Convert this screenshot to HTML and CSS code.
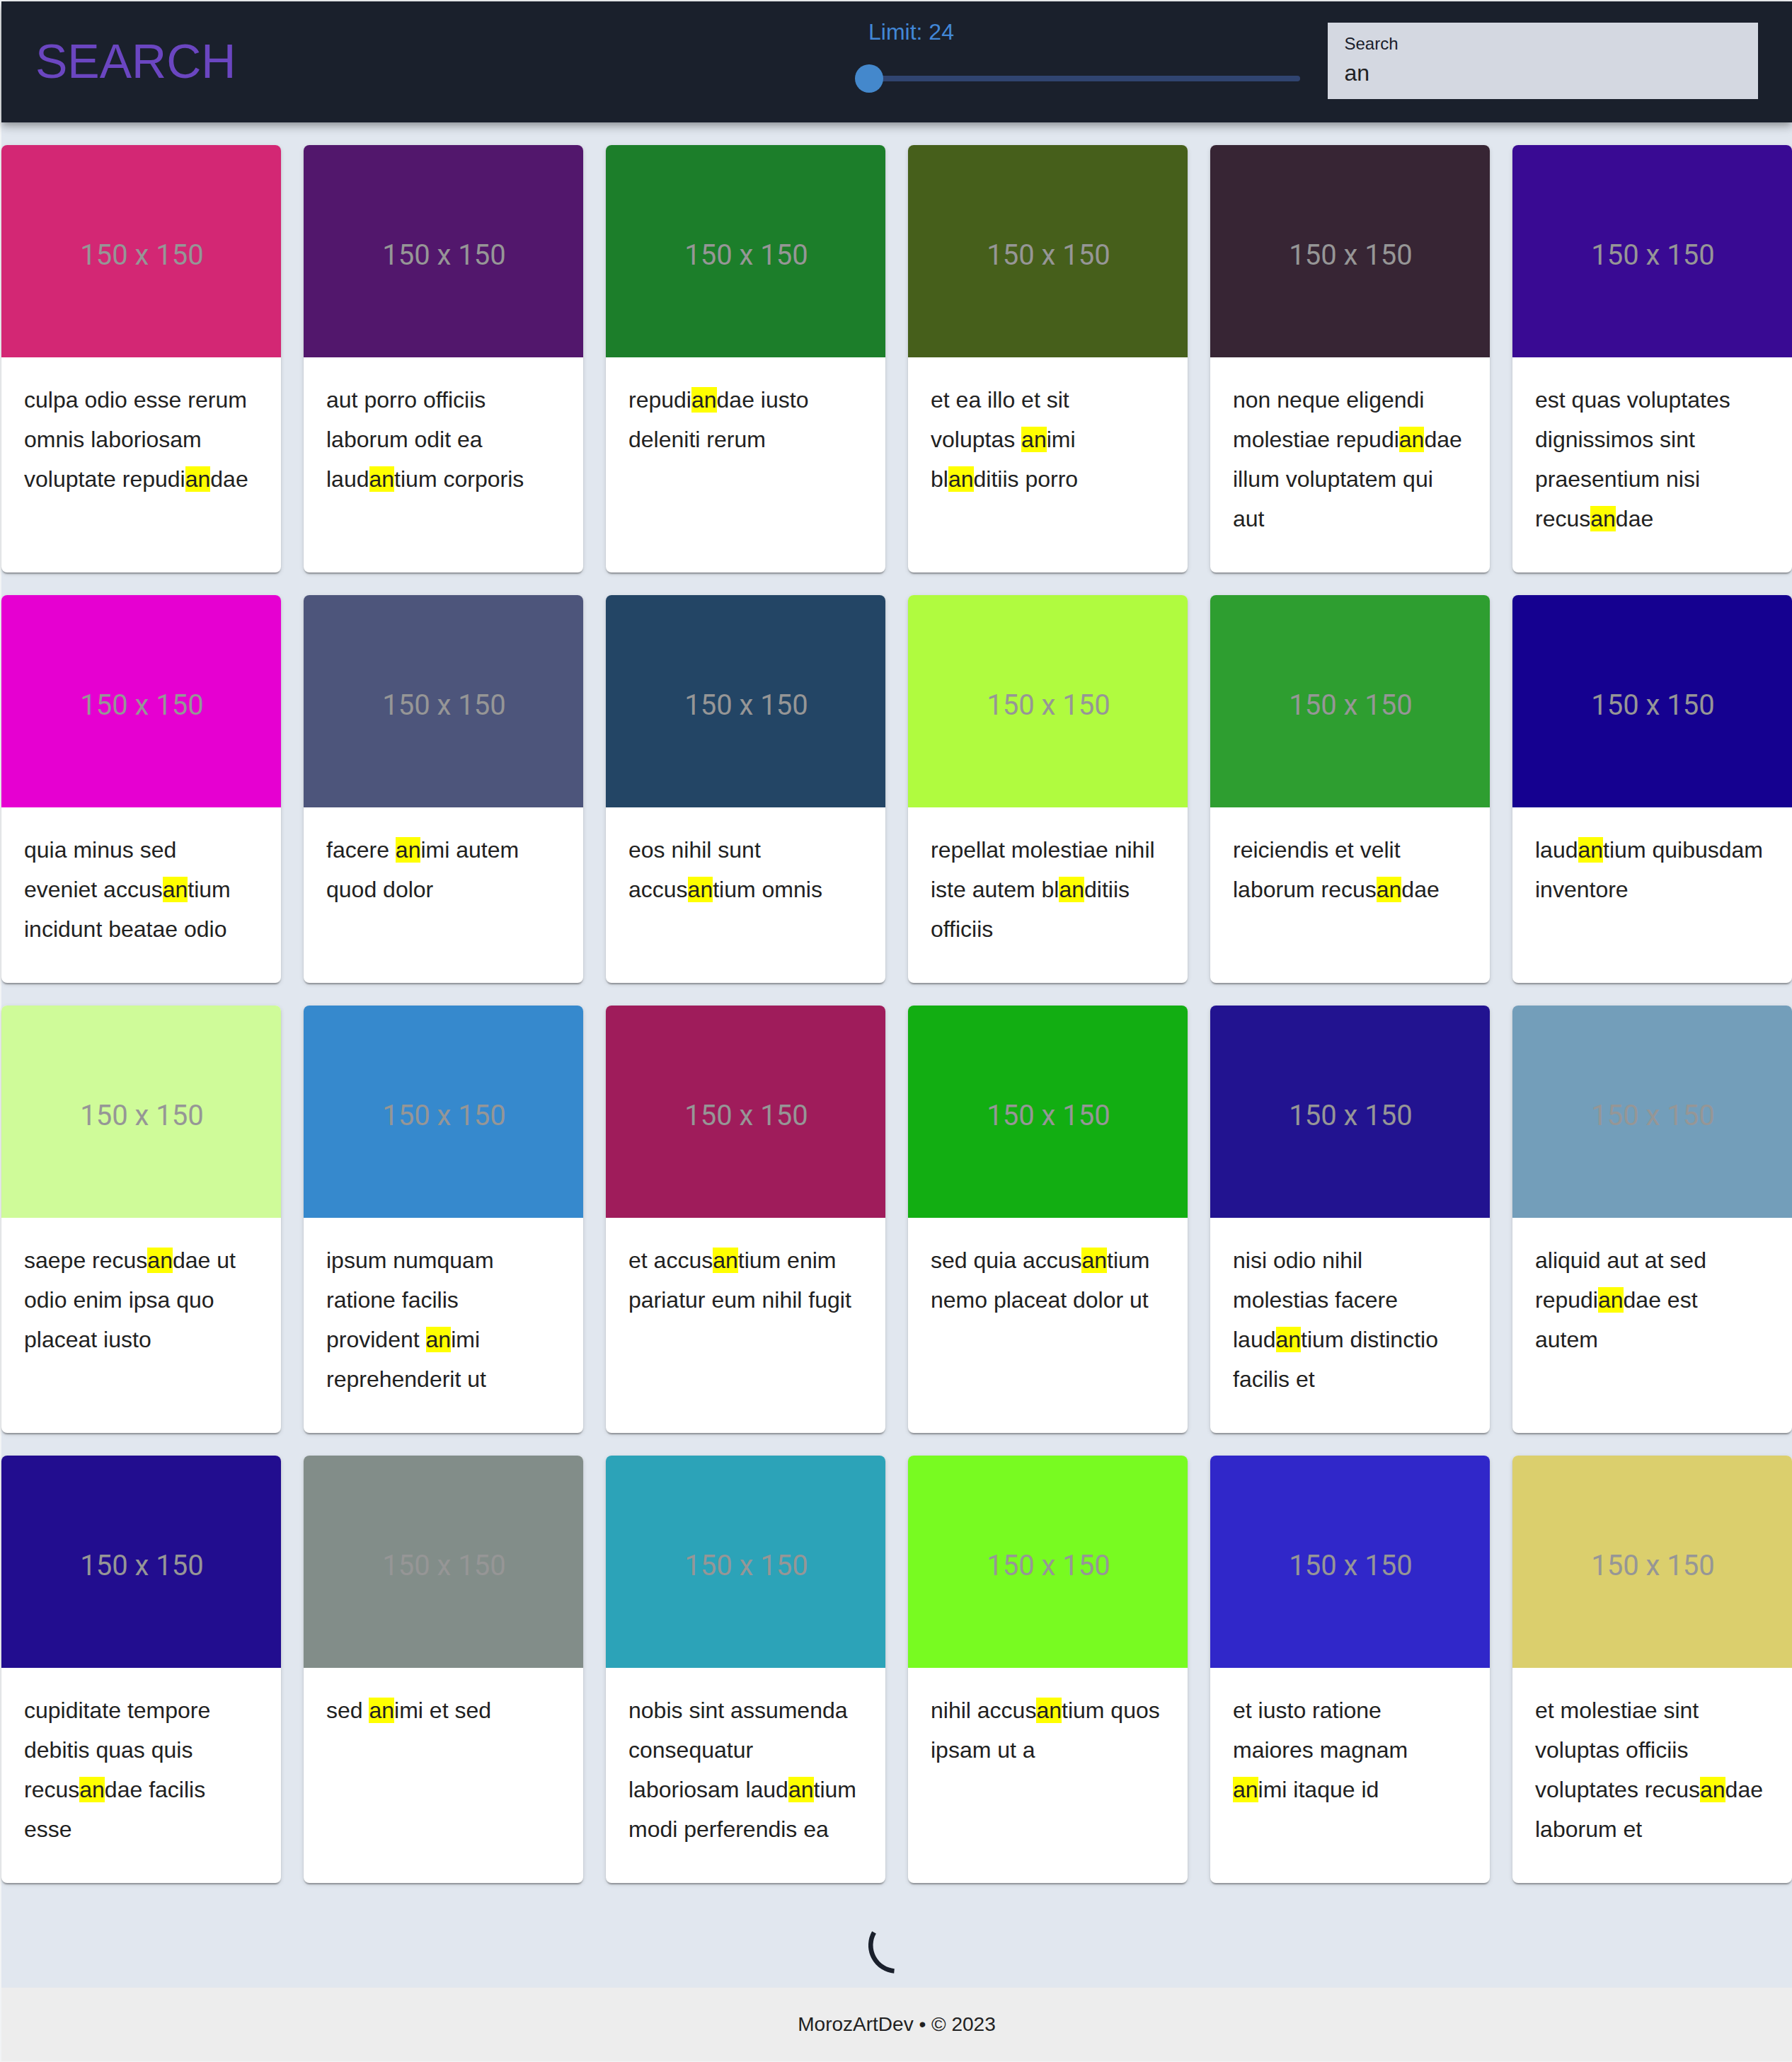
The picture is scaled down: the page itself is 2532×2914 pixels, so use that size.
FILE: index.html
```html
<!DOCTYPE html>
<html lang="en">
<head>
<meta charset="utf-8">
<title>Search</title>
<link rel="stylesheet" href="styles.css">
</head>
<body>
<header class="app-bar">
  <h1 class="title">SEARCH</h1>
  <div class="limit">
    <label class="limit-label" for="limit">Limit: 24</label>
    <input class="slider" id="limit" type="range" min="24" max="100" value="24">
  </div>
  <div class="search">
    <label class="search-label" for="search">Search</label>
    <input class="search-input" id="search" type="text" value="an">
  </div>
</header>
<main class="content">
  <section class="grid">
    <article class="card"><div class="thumb c1">150 x 150</div><p class="text">culpa odio esse rerum omnis laboriosam voluptate repudi<mark>an</mark>dae</p></article>
    <article class="card"><div class="thumb c2">150 x 150</div><p class="text">aut porro officiis laborum odit ea laud<mark>an</mark>tium corporis</p></article>
    <article class="card"><div class="thumb c3">150 x 150</div><p class="text">repudi<mark>an</mark>dae iusto deleniti rerum</p></article>
    <article class="card"><div class="thumb c4">150 x 150</div><p class="text">et ea illo et sit<br>voluptas <mark>an</mark>imi<br>bl<mark>an</mark>ditiis porro</p></article>
    <article class="card"><div class="thumb c5">150 x 150</div><p class="text">non neque eligendi molestiae repudi<mark>an</mark>dae illum voluptatem qui aut</p></article>
    <article class="card"><div class="thumb c6">150 x 150</div><p class="text">est quas voluptates dignissimos sint praesentium nisi recus<mark>an</mark>dae</p></article>
    <article class="card"><div class="thumb c7">150 x 150</div><p class="text">quia minus sed<br>eveniet accus<mark>an</mark>tium<br>incidunt beatae odio</p></article>
    <article class="card"><div class="thumb c8">150 x 150</div><p class="text">facere <mark>an</mark>imi autem quod dolor</p></article>
    <article class="card"><div class="thumb c9">150 x 150</div><p class="text">eos nihil sunt accus<mark>an</mark>tium omnis</p></article>
    <article class="card"><div class="thumb c10">150 x 150</div><p class="text">repellat molestiae nihil iste autem bl<mark>an</mark>ditiis officiis</p></article>
    <article class="card"><div class="thumb c11">150 x 150</div><p class="text">reiciendis et velit laborum recus<mark>an</mark>dae</p></article>
    <article class="card"><div class="thumb c12">150 x 150</div><p class="text">laud<mark>an</mark>tium quibusdam inventore</p></article>
    <article class="card"><div class="thumb c13">150 x 150</div><p class="text">saepe recus<mark>an</mark>dae ut odio enim ipsa quo placeat iusto</p></article>
    <article class="card"><div class="thumb c14">150 x 150</div><p class="text">ipsum numquam<br>ratione facilis<br>provident <mark>an</mark>imi<br>reprehenderit ut</p></article>
    <article class="card"><div class="thumb c15">150 x 150</div><p class="text">et accus<mark>an</mark>tium enim pariatur eum nihil fugit</p></article>
    <article class="card"><div class="thumb c16">150 x 150</div><p class="text">sed quia accus<mark>an</mark>tium nemo placeat dolor ut</p></article>
    <article class="card"><div class="thumb c17">150 x 150</div><p class="text">nisi odio nihil<br>molestias facere<br>laud<mark>an</mark>tium distinctio<br>facilis et</p></article>
    <article class="card"><div class="thumb c18">150 x 150</div><p class="text">aliquid aut at sed<br>repudi<mark>an</mark>dae est<br>autem</p></article>
    <article class="card"><div class="thumb c19">150 x 150</div><p class="text">cupiditate tempore debitis quas quis recus<mark>an</mark>dae facilis esse</p></article>
    <article class="card"><div class="thumb c20">150 x 150</div><p class="text">sed <mark>an</mark>imi et sed</p></article>
    <article class="card"><div class="thumb c21">150 x 150</div><p class="text">nobis sint assumenda consequatur laboriosam laud<mark>an</mark>tium modi perferendis ea</p></article>
    <article class="card"><div class="thumb c22">150 x 150</div><p class="text">nihil accus<mark>an</mark>tium quos ipsam ut a</p></article>
    <article class="card"><div class="thumb c23">150 x 150</div><p class="text">et iusto ratione maiores magnam <mark>an</mark>imi itaque id</p></article>
    <article class="card"><div class="thumb c24">150 x 150</div><p class="text">et molestiae sint voluptas officiis voluptates recus<mark>an</mark>dae laborum et</p></article>
  </section>
  <div class="loader" role="progressbar" aria-label="Loading">
    <svg class="spinner" viewBox="0 0 80 80" aria-hidden="true"><path d="M8 21.9A36.7 36.7 0 0 0 36.5 76.5" fill="none" stroke="#1a202c" stroke-width="6.6"/></svg>
  </div>
</main>
<footer class="footer">MorozArtDev • © 2023</footer>
</body>
</html>
```
FILE: styles.css
```css
* {
  box-sizing: border-box;
}

body {
  margin: 0;
  padding: 2px 0 1px 2px;
  background: #f2f4f6;
  color: #212121;
  font-family: "Liberation Sans", Arial, Helvetica, sans-serif;
  font-size: 32px;
}

/* Top bar */
.app-bar {
  position: relative;
  display: flex;
  align-items: flex-start;
  gap: 40px;
  padding: 30px 48px 33px;
  background: #1a202c;
  box-shadow: 0 4px 8px -2px rgba(0, 0, 0, 0.2), 0 8px 10px rgba(0, 0, 0, 0.14), 0 2px 20px rgba(0, 0, 0, 0.12);
}

.title {
  flex: 1;
  align-self: center;
  margin: 0;
  color: #6b46c1;
  font-size: 68px;
  font-weight: 400;
  line-height: 84px;
}

.limit,
.search {
  width: 25%;
}

.limit {
  display: flex;
  flex-direction: column;
  gap: 33px;
}

.limit-label {
  color: #4287d6;
  line-height: 26px;
}

.slider {
  appearance: none;
  display: block;
  width: calc(100% + 20px);
  height: 40px;
  margin: 0 0 0 -19px;
  background: transparent;
}

.slider::-webkit-slider-runnable-track {
  height: 8px;
  background: linear-gradient(#304470, #304470) 20px 0 no-repeat;
  border-radius: 4px;
}

.slider::-webkit-slider-thumb {
  appearance: none;
  width: 40px;
  height: 40px;
  margin-top: -16px;
  border-radius: 50%;
  background: #4488cc;
}

.search {
  display: flex;
  flex-direction: column;
  padding: 16px 24px 10px;
  background: #d4d8e1;
}

.search-label {
  color: #1a202c;
  font-size: 24px;
  line-height: 28px;
}

.search-input {
  width: 100%;
  height: 54px;
  padding: 0;
  border: 0;
  background: transparent;
  color: #212121;
  font: inherit;
  outline: 0;
}

/* Results */
.content {
  padding-top: 32px;
  background: #e1e7ef;
}

.grid {
  display: grid;
  grid-template-columns: repeat(6, 1fr);
  gap: 32px;
}

.card {
  overflow: hidden;
  border-radius: 8px;
  background: #fff;
  box-shadow: 0 4px 2px -2px rgba(0, 0, 0, 0.2), 0 2px 2px rgba(0, 0, 0, 0.14), 0 2px 6px rgba(0, 0, 0, 0.12);
}

.thumb {
  display: flex;
  align-items: center;
  justify-content: center;
  height: 300px;
  padding: 10px 0 0 2px;
  color: #969696;
  font-family: Roboto, sans-serif;
  font-size: 40px;
}

.text {
  margin: 0;
  padding: 32px 32px 48px;
  line-height: 56px;
}

mark {
  background: #ff0;
  color: inherit;
}

.c1 { background: #d32774; }
.c2 { background: #52176c; }
.c3 { background: #1c7e2a; }
.c4 { background: #465f1b; }
.c5 { background: #372534; }
.c6 { background: #390a93; }
.c7 { background: #e600d1; }
.c8 { background: #4d557b; }
.c9 { background: #234565; }
.c10 { background: #b0fb3f; }
.c11 { background: #2e9e30; }
.c12 { background: #150190; }
.c13 { background: #cffb99; }
.c14 { background: #3689cd; }
.c15 { background: #9f1c5b; }
.c16 { background: #12ae12; }
.c17 { background: #221390; }
.c18 { background: #739eba; }
.c19 { background: #220d8f; }
.c20 { background: #828d89; }
.c21 { background: #2ca3b8; }
.c22 { background: #78fb21; }
.c23 { background: #3027c9; }
.c24 { background: #dbcf6d; }

.loader {
  display: flex;
  justify-content: center;
  padding: 48px 0 20px;
}

.spinner {
  width: 80px;
  height: 80px;
}

.footer {
  padding: 32px;
  background: #ededed;
  font-size: 28px;
  line-height: 40px;
  text-align: center;
}
```
